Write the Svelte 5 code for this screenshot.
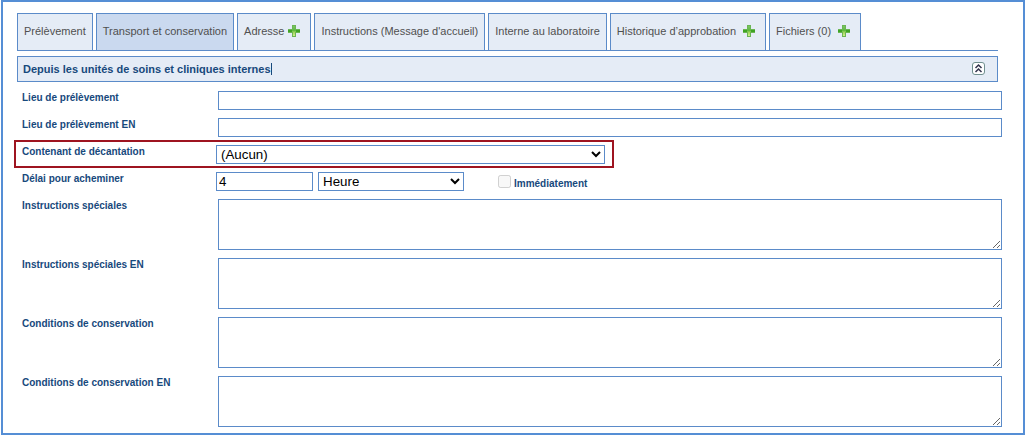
<script>
    let tabs = [
        { title: 'Prélèvement' },
        { title: 'Transport et conservation' },
        { title: 'Adresse', add: true, tight: true },
        { title: "Instructions (Message d'accueil)" },
        { title: 'Interne au laboratoire' },
        { title: 'Historique d’approbation', add: true },
        { title: 'Fichiers (0)', add: true }
    ];
    let notes = [
        { id: 'instructions', label: 'Instructions spéciales', value: '' },
        { id: 'instructions-en', label: 'Instructions spéciales EN', value: '' },
        { id: 'conditions', label: 'Conditions de conservation', value: '' },
        { id: 'conditions-en', label: 'Conditions de conservation EN', value: '' }
    ];
    let active = 1;
    let open = true;
    let lieu = '';
    let lieuEn = '';
    let contenant = '(Aucun)';
    let delai = '4';
    let unite = 'Heure';
</script>

<main>
    <nav>
        {#each tabs as tab, index}
            <button type="button" class="tab" class:active={index === active} class:add={tab.add} class:tight={tab.tight} on:click={() => (active = index)}>
                <span>{tab.title}</span>
                {#if tab.add}
                    <svg class="plus" viewBox="0 0 12 12" aria-hidden="true">
                        <defs>
                            <linearGradient id="green{index}" x1="0" y1="0" x2="0" y2="1">
                                <stop offset="0" stop-color="#7cc465" />
                                <stop offset="0.45" stop-color="#5fb83f" />
                                <stop offset="0.65" stop-color="#a5d95c" />
                                <stop offset="1" stop-color="#d3ee90" />
                            </linearGradient>
                        </defs>
                        <path d="M4 0h4v4h4v4H8v4H4V8H0V4h4z" fill="#6bb653" />
                        <path d="M5 1h2v4h4v2H7v4H5V7H1V5h4z" fill="url(#green{index})" />
                        <path d="M0 5h4v2H0zM8 5h4v2H8z" fill="#3fa324" />
                    </svg>
                {/if}
            </button>
        {/each}
    </nav>

    <header>
        <h2>Depuis les unités de soins et cliniques internes<span class="caret"></span></h2>
        <button type="button" class="toggle" aria-label="Replier" on:click={() => (open = !open)}>
            <svg viewBox="0 0 13 13" aria-hidden="true">
                <rect x="0.5" y="0.5" width="12" height="12" rx="2.5" fill="#fff" stroke="#71908f" />
                <path d="M3.5 6L6.5 3L9.5 6M3.5 10L6.5 7L9.5 10" fill="none" stroke="#33334d" stroke-width="1.5" />
            </svg>
        </button>
    </header>

    {#if open}
    <form>
        <div class="row">
            <label for="lieu">Lieu de prélèvement</label>
            <input id="lieu" class="wide" type="text" bind:value={lieu} />
        </div>
        <div class="row">
            <label for="lieu-en">Lieu de prélèvement EN</label>
            <input id="lieu-en" class="wide" type="text" bind:value={lieuEn} />
        </div>
        <div class="row highlight">
            <label for="contenant">Contenant de décantation</label>
            <select id="contenant" class="contenant" bind:value={contenant}>
                <option>(Aucun)</option>
            </select>
        </div>
        <div class="row">
            <label for="delai">Délai pour acheminer</label>
            <div class="delay">
                <input id="delai" type="text" bind:value={delai} />
                <select aria-label="Unité" bind:value={unite}>
                    <option>Heure</option>
                </select>
                <input id="immediat" type="checkbox" disabled />
                <label for="immediat">Immédiatement</label>
            </div>
        </div>
        {#each notes as note}
            <div class="row">
                <label for={note.id}>{note.label}</label>
                <textarea id={note.id} class="wide" bind:value={note.value}></textarea>
            </div>
        {/each}
    </form>
    {/if}
</main>

<style>
    :global(body) {
        margin: 0;
        background: #fff;
    }
    main {
        margin: 0 1px;
        padding: 11px 21px 6px 14px;
        border: 2px solid #558ed5;
        font-family: "Liberation Sans", Arial, sans-serif;
        font-size: 11px;
    }
    nav {
        display: flex;
        gap: 3px;
        margin-right: 4px;
        border-bottom: 1px solid #5b8bc9;
    }
    .tab {
        display: flex;
        align-items: center;
        height: 37px;
        padding: 0 6px 2px;
        border: 1px solid #5b8bc9;
        border-bottom: 0;
        background: #e5ecf6;
        color: #505050;
        font-family: inherit;
        font-size: 11px;
        white-space: nowrap;
    }
    .tab.active {
        background: #cad9ef;
    }
    .tab.add {
        gap: 7px;
        padding-right: 10px;
    }
    .tab.tight {
        gap: 4px;
    }
    .plus {
        width: 12px;
        height: 12px;
        margin-bottom: 1px;
    }
    header {
        display: flex;
        align-items: center;
        justify-content: space-between;
        height: 24px;
        margin: 5px 4px 9px 0;
        padding: 0 12px 0 5px;
        border: 1px solid #5b8bc9;
        background: #e5ecf6;
    }
    h2 {
        display: flex;
        align-items: center;
        margin: 0;
        color: #17497c;
        font-size: 11px;
    }
    .caret {
        width: 1px;
        height: 12px;
        background: #17497c;
    }
    .toggle {
        display: flex;
        padding: 0 0 1px;
        border: 0;
        background: none;
    }
    .toggle svg {
        width: 13px;
        height: 13px;
    }
    form {
        display: flex;
        flex-direction: column;
        gap: 8px;
        padding-left: 5px;
    }
    .row {
        display: grid;
        grid-template-columns: 194px 1fr;
        align-items: start;
    }
    .highlight {
        align-self: flex-start;
        margin: -5px 0 -4px -8px;
        padding: 3px 7px 2px 6px;
        border: 2px solid #9e1420;
    }
    label {
        color: #17497c;
        font-size: 10px;
        font-weight: bold;
        line-height: 14px;
    }
    input, select, textarea {
        box-sizing: border-box;
        height: 19px;
        margin: 0;
        border: 1px solid #5b8bc9;
        border-radius: 0;
        background: #fff;
        color: #000;
        font-family: inherit;
    }
    .wide {
        width: auto;
        margin-left: 2px;
    }
    textarea {
        display: block;
        height: 51px;
        resize: both;
    }
    .contenant {
        width: 389px;
    }
    .delay {
        display: flex;
        align-items: center;
    }
    .delay input[type="text"] {
        width: 97px;
        margin-right: 5px;
    }
    .delay select {
        width: 146px;
        margin-right: 34px;
    }
    .delay input[type="checkbox"] {
        width: 13px;
        height: 13px;
        margin-right: 3px;
    }
    .delay label {
        align-self: flex-end;
    }
</style>
